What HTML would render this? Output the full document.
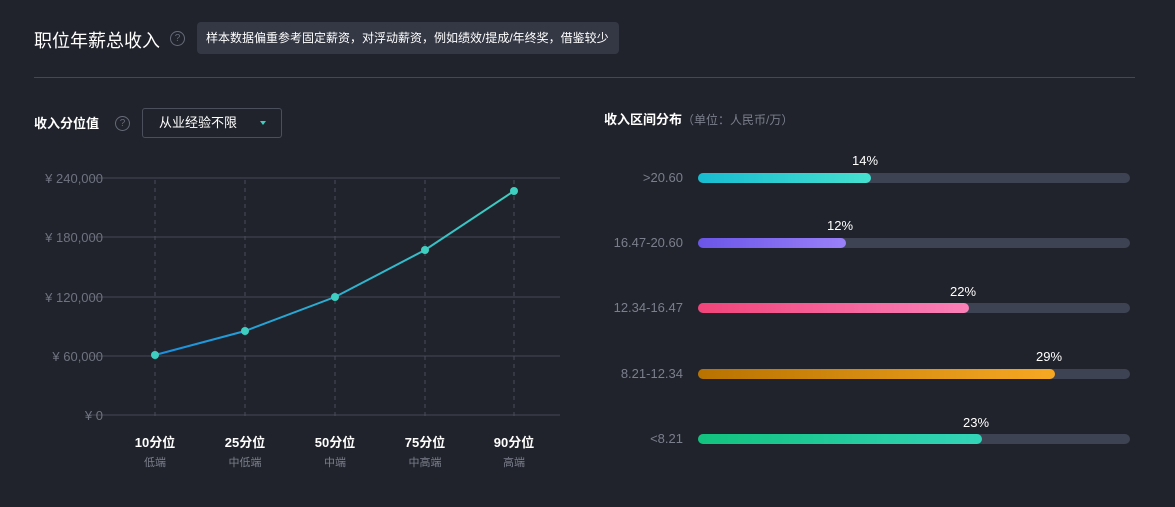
<!DOCTYPE html><html><head><meta charset="utf-8"><style>
body{margin:0;width:1175px;height:507px;background:#20232b;font-family:"Liberation Sans","Noto Sans CJK SC",sans-serif;color:#fff;position:relative;overflow:hidden}
.a{position:absolute;white-space:nowrap}
.q{position:absolute;width:13px;height:13px;border:1px solid #666b78;border-radius:50%;color:#666b78;font-size:10px;text-align:center;line-height:13px}
.lbl{position:absolute;right:492px;font-size:13px;color:#7b7f8c;text-align:right}
.track{position:absolute;left:698px;width:432px;height:10px;border-radius:5px;background:#3d4352}
.fill{height:10px;border-radius:5px}
.pct{position:absolute;font-size:13px;color:#fff;transform:translateX(-50%)}
</style></head><body>
<div class="a" style="left:34px;top:27px;font-size:18px;color:#fff">职位年薪总收入</div>
<div class="q" style="left:170px;top:31px">?</div>
<div class="a" style="left:197px;top:22px;width:422px;height:32px;background:#343844;border-radius:4px;font-size:12px;line-height:32px;padding-left:9px;box-sizing:border-box;color:#fff">样本数据偏重参考固定薪资，对浮动薪资，例如绩效/提成/年终奖，借鉴较少</div>
<div class="a" style="left:34px;top:77px;width:1101px;height:1px;background:#444854"></div>
<div class="a" style="left:34px;top:113px;font-size:13px;font-weight:bold">收入分位值</div>
<div class="q" style="left:115px;top:116px">?</div>
<div class="a" style="left:142px;top:108px;width:140px;height:30px;border:1px solid #4a4f5c;border-radius:3px;box-sizing:border-box;font-size:13px;line-height:28px;padding-left:16px">从业经验不限<span style="position:absolute;left:117px;top:12px;border:3px solid transparent;border-top:4px solid #3ecfc0;border-bottom:0"></span></div>
<svg class="a" style="left:0;top:0" width="590" height="507">
<g stroke="#464a55" stroke-width="1"><line x1="90" y1="178" x2="560" y2="178"/><line x1="90" y1="237" x2="560" y2="237"/><line x1="90" y1="297" x2="560" y2="297"/><line x1="90" y1="356" x2="560" y2="356"/><line x1="90" y1="415" x2="560" y2="415"/></g>
<g stroke="#4a4e5a" stroke-dasharray="4,4"><line x1="155" y1="180" x2="155" y2="420"/><line x1="245" y1="180" x2="245" y2="420"/><line x1="335" y1="180" x2="335" y2="420"/><line x1="425" y1="180" x2="425" y2="420"/><line x1="514" y1="180" x2="514" y2="420"/></g>
<g font-size="13" fill="#6f7380" text-anchor="end" font-family="Liberation Sans,sans-serif"><text x="103" y="183">¥ 240,000</text><text x="103" y="242">¥ 180,000</text><text x="103" y="302">¥ 120,000</text><text x="103" y="361">¥ 60,000</text><text x="103" y="420">¥ 0</text></g>
<defs><linearGradient id="lg" x1="0" x2="1"><stop offset="0" stop-color="#1a8fe0"/><stop offset="1" stop-color="#3ecfc0"/></linearGradient></defs>
<polyline points="155,355 245,331 335,297 425,250 514,191" fill="none" stroke="url(#lg)" stroke-width="2"/>
<g fill="#3ecfc0"><circle cx="155" cy="355" r="4"/><circle cx="245" cy="331" r="4"/><circle cx="335" cy="297" r="4"/><circle cx="425" cy="250" r="4"/><circle cx="514" cy="191" r="4"/></g>
<g text-anchor="middle" font-family="Liberation Sans,Noto Sans CJK SC,sans-serif"><g font-size="13" fill="#fff" font-weight="bold"><text x="155" y="447">10分位</text><text x="245" y="447">25分位</text><text x="335" y="447">50分位</text><text x="425" y="447">75分位</text><text x="514" y="447">90分位</text></g>
<g font-size="11" fill="#7b7f8c"><text x="155" y="466">低端</text><text x="245" y="466">中低端</text><text x="335" y="466">中端</text><text x="425" y="466">中高端</text><text x="514" y="466">高端</text></g></g>
</svg>
<div class="a" style="left:604px;top:109px;font-size:13px;font-weight:bold">收入区间分布<span style="font-weight:normal;color:#7b7f8c;font-size:12px">（单位：人民币/万）</span></div>
<div class="lbl" style="top:170px">&gt;20.60</div>
<div class="track" style="top:173px"><div class="fill" style="width:173px;background:linear-gradient(90deg,#17bcd0,#46e0cf)"></div></div><div class="pct" style="left:865px;top:153px">14%</div>
<div class="lbl" style="top:235px">16.47-20.60</div>
<div class="track" style="top:238px"><div class="fill" style="width:148px;background:linear-gradient(90deg,#6a55e8,#9a80f8)"></div></div><div class="pct" style="left:840px;top:218px">12%</div>
<div class="lbl" style="top:300px">12.34-16.47</div>
<div class="track" style="top:303px"><div class="fill" style="width:271px;background:linear-gradient(90deg,#f0447a,#fa80b8)"></div></div><div class="pct" style="left:963px;top:284px">22%</div>
<div class="lbl" style="top:366px">8.21-12.34</div>
<div class="track" style="top:369px"><div class="fill" style="width:357px;background:linear-gradient(90deg,#b87200,#f7a823)"></div></div><div class="pct" style="left:1049px;top:349px">29%</div>
<div class="lbl" style="top:431px">&lt;8.21</div>
<div class="track" style="top:434px"><div class="fill" style="width:284px;background:linear-gradient(90deg,#12c27e,#33d4b8)"></div></div><div class="pct" style="left:976px;top:415px">23%</div>
</body></html>
